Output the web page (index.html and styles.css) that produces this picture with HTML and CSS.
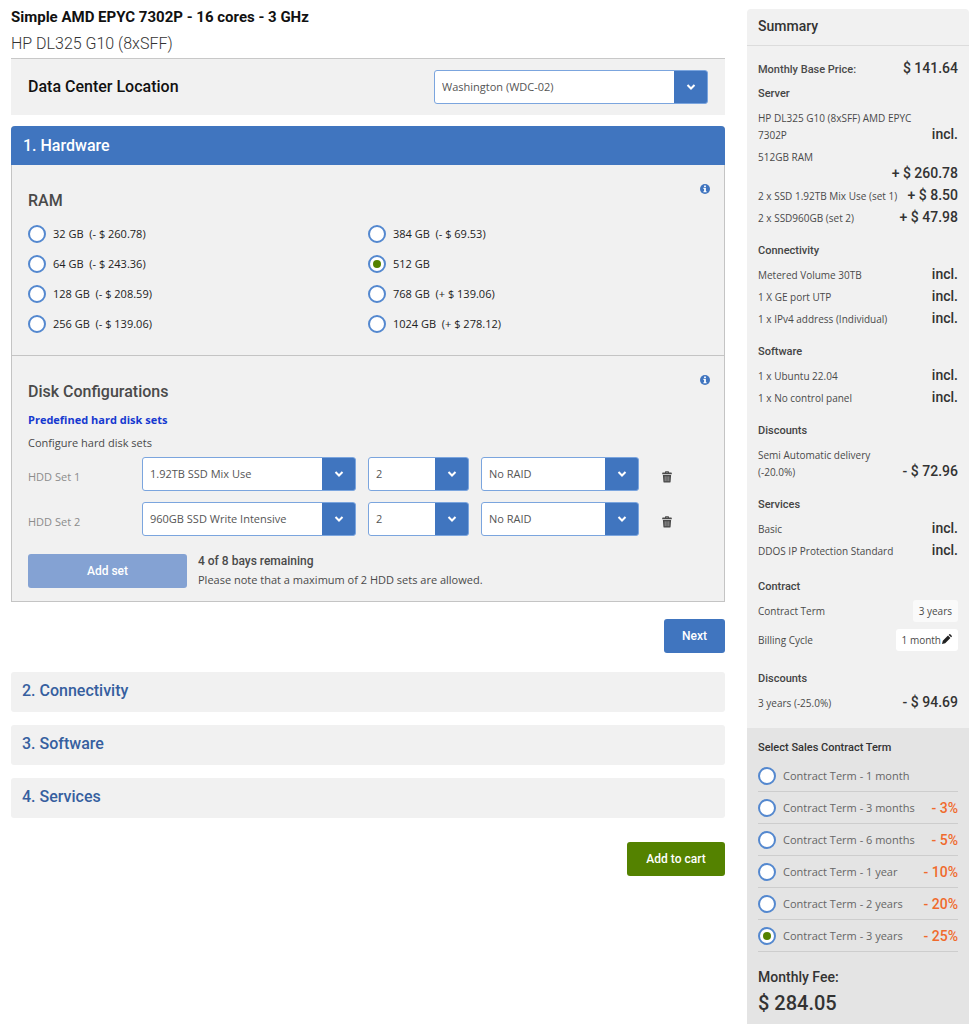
FILE: index.html
```html
<!DOCTYPE html>
<html lang="en">
<head>
    <meta charset="UTF-8">
    <meta name="viewport" content="width=device-width, initial-scale=1.0">
    <title>Simple AMD EPYC 7302P - Configure server</title>
    <link rel="stylesheet" href="styles.css">
</head>
<body>
    <!-- Shared icons -->
    <svg class="sprite" aria-hidden="true">
        <symbol id="icon-info" viewBox="0 0 10 10">
            <circle cx="5" cy="5" r="5" fill="#4075bf"/>
            <path d="M4.1 1.4h1.8v1.5H4.1zM3.4 3.8h2.5v3.4h.7v1.1H3.4V7.2h.7V4.9h-.7z" fill="#fff"/>
        </symbol>
        <symbol id="icon-trash" viewBox="0 0 10 12">
            <path d="M3 1.6V.9Q3 .3 3.6.3h2.8q.6 0 .6.6v.7h2.2q.6 0 .6.6v1.1H.2V2.2q0-.6.6-.6zM4 1.2v.4h2v-.4zM.9 4h8.2l-.5 6.7q-.1.9-1 .9H2.4q-.9 0-1-.9z" fill="#4a4a4a"/>
            <path d="M3.2 5.3v4.9M5 5.3v4.9M6.8 5.3v4.9" stroke="#b5b5b5" stroke-width=".7"/>
        </symbol>
        <symbol id="icon-pencil" viewBox="0 0 10 10">
            <path d="M0 10l.8-3.2L6 1.6l2.4 2.4-5.2 5.2zM6.7.9l.6-.6q.5-.5 1 0l1.4 1.4q.5.5 0 1l-.6.6z" fill="#222"/>
        </symbol>
    </svg>

    <div class="page">
        <main class="main">
            <header class="product">
                <h1>Simple AMD EPYC 7302P - 16 cores - 3 GHz</h1>
                <p>HP DL325 G10 (8xSFF)</p>
            </header>

            <div class="location">
                <label for="location">Data Center Location</label>
                <select class="select" id="location">
                    <option>Washington (WDC-02)</option>
                </select>
            </div>

            <section class="panel">
                <h2 class="panel-title">1. Hardware</h2>

                <div class="panel-section ram">
                    <div class="section-head">
                        <h3>RAM</h3>
                        <button class="icon-button" type="button" aria-label="About RAM"><svg class="info"><use href="#icon-info"/></svg></button>
                    </div>
                    <div class="ram-options">
                        <label><input class="radio" type="radio" name="ram">32 GB &nbsp;(- $ 260.78)</label>
                        <label><input class="radio" type="radio" name="ram">64 GB &nbsp;(- $ 243.36)</label>
                        <label><input class="radio" type="radio" name="ram">128 GB &nbsp;(- $ 208.59)</label>
                        <label><input class="radio" type="radio" name="ram">256 GB &nbsp;(- $ 139.06)</label>
                        <label><input class="radio" type="radio" name="ram">384 GB &nbsp;(- $ 69.53)</label>
                        <label><input class="radio" type="radio" name="ram" checked>512 GB</label>
                        <label><input class="radio" type="radio" name="ram">768 GB &nbsp;(+ $ 139.06)</label>
                        <label><input class="radio" type="radio" name="ram">1024 GB &nbsp;(+ $ 278.12)</label>
                    </div>
                </div>

                <div class="panel-section disks">
                    <div class="section-head">
                        <h3>Disk Configurations</h3>
                        <button class="icon-button" type="button" aria-label="About disk configurations"><svg class="info"><use href="#icon-info"/></svg></button>
                    </div>
                    <a class="predefined" href="#">Predefined hard disk sets</a>
                    <p class="configure">Configure hard disk sets</p>

                    <div class="disk-row">
                        <label for="disk1">HDD Set 1</label>
                        <select class="select" id="disk1"><option>1.92TB SSD Mix Use</option></select>
                        <select class="select" aria-label="Set 1 amount"><option>2</option></select>
                        <select class="select" aria-label="Set 1 RAID"><option>No RAID</option></select>
                        <button class="icon-button" type="button" aria-label="Remove set 1"><svg class="trash"><use href="#icon-trash"/></svg></button>
                    </div>
                    <div class="disk-row">
                        <label for="disk2">HDD Set 2</label>
                        <select class="select" id="disk2"><option>960GB SSD Write Intensive</option></select>
                        <select class="select" aria-label="Set 2 amount"><option>2</option></select>
                        <select class="select" aria-label="Set 2 RAID"><option>No RAID</option></select>
                        <button class="icon-button" type="button" aria-label="Remove set 2"><svg class="trash"><use href="#icon-trash"/></svg></button>
                    </div>

                    <div class="add-row">
                        <button class="button add-set" type="button" disabled>Add set</button>
                        <div class="bays">
                            <strong>4 of 8 bays remaining</strong>
                            <p>Please note that a maximum of 2 HDD sets are allowed.</p>
                        </div>
                    </div>
                </div>
            </section>

            <div class="actions">
                <button class="button next" type="button">Next</button>
            </div>

            <div class="steps">
                <button class="step" type="button">2. Connectivity</button>
                <button class="step" type="button">3. Software</button>
                <button class="step" type="button">4. Services</button>
            </div>

            <div class="actions cart">
                <button class="button add-to-cart" type="button">Add to cart</button>
            </div>
        </main>

        <aside class="summary">
            <h2>Summary</h2>

            <div class="summary-body">
                <div class="line base"><span>Monthly Base Price:</span><b>$ 141.64</b></div>

                <h3 class="first">Server</h3>
                <ul>
                    <li class="line"><span>HP DL325 G10 (8xSFF) AMD EPYC 7302P</span><b>incl.</b></li>
                    <li class="line stacked"><span>512GB RAM</span><b>+ $ 260.78</b></li>
                    <li class="line"><span>2 x SSD 1.92TB Mix Use (set 1)</span><b>+ $ 8.50</b></li>
                    <li class="line"><span>2 x SSD960GB (set 2)</span><b>+ $ 47.98</b></li>
                </ul>

                <h3>Connectivity</h3>
                <ul>
                    <li class="line"><span>Metered Volume 30TB</span><b>incl.</b></li>
                    <li class="line"><span>1 X GE port UTP</span><b>incl.</b></li>
                    <li class="line"><span>1 x IPv4 address (Individual)</span><b>incl.</b></li>
                </ul>

                <h3>Software</h3>
                <ul>
                    <li class="line"><span>1 x Ubuntu 22.04</span><b>incl.</b></li>
                    <li class="line"><span>1 x No control panel</span><b>incl.</b></li>
                </ul>

                <h3>Discounts</h3>
                <ul>
                    <li class="line"><span>Semi Automatic delivery (-20.0%)</span><b>- $ 72.96</b></li>
                </ul>

                <h3>Services</h3>
                <ul>
                    <li class="line"><span>Basic</span><b>incl.</b></li>
                    <li class="line"><span>DDOS IP Protection Standard</span><b>incl.</b></li>
                </ul>

                <div class="contract">
                    <h3>Contract</h3>
                    <div class="setting"><span>Contract Term</span><span class="chip">3 years</span></div>
                    <div class="setting"><span>Billing Cycle</span><button class="chip editable" type="button">1 month<svg class="pencil"><use href="#icon-pencil"/></svg></button></div>
                </div>

                <h3>Discounts</h3>
                <ul>
                    <li class="line"><span>3 years (-25.0%)</span><b>- $ 94.69</b></li>
                </ul>
            </div>

            <div class="terms">
                <h3>Select Sales Contract Term</h3>
                <label class="term"><input class="radio" type="radio" name="term">Contract Term - 1 month</label>
                <label class="term"><input class="radio" type="radio" name="term">Contract Term - 3 months<b>- 3%</b></label>
                <label class="term"><input class="radio" type="radio" name="term">Contract Term - 6 months<b>- 5%</b></label>
                <label class="term"><input class="radio" type="radio" name="term">Contract Term - 1 year<b>- 10%</b></label>
                <label class="term"><input class="radio" type="radio" name="term">Contract Term - 2 years<b>- 20%</b></label>
                <label class="term"><input class="radio" type="radio" name="term" checked>Contract Term - 3 years<b>- 25%</b></label>
                <div class="fee">Monthly Fee:<strong>$ 284.05</strong></div>
            </div>
        </aside>
    </div>
</body>
</html>
```
FILE: styles.css
```css
* {
    box-sizing: border-box;
}
body {
    margin: 0;
    font-family: "Open Sans", sans-serif;
    font-size: 11px;
    line-height: 18px;
    color: #4a4a4a;
    background: #fff;
}
h1, h2, h3, p, ul {
    margin: 0;
    padding: 0;
}
ul {
    list-style: none;
}
button, select {
    font-family: inherit;
    margin: 0;
}
.sprite {
    display: none;
}
.page {
    display: grid;
    grid-template-columns: minmax(0, 1fr) 222px;
    column-gap: 22px;
    min-height: 100vh;
    padding: 0 4px 0 11px;
}

/* Product header */
.product {
    padding-top: 4px;
    color: #333;
    border-bottom: 1px solid #c8c8c8;
}
.product h1 {
    font: 700 15px/26px Roboto, sans-serif;
    color: #111;
}
.product p {
    padding: 1px 0;
    font: 300 16px/26px Roboto, sans-serif;
}
.location {
    display: flex;
    align-items: center;
    justify-content: space-between;
    padding: 11px 17px;
    background: #f1f1f1;
}
.location label {
    font: 500 16px/24px Roboto, sans-serif;
    color: #111;
}
.location .select {
    width: 274px;
}

/* Form controls */
.select {
    appearance: none;
    height: 34px;
    width: 100%;
    padding: 0 42px 1px 7px;
    border: 1px solid #7ba5de;
    border-radius: 3px;
    font-size: 11px;
    color: #555;
    background-color: #fff;
    background-image:
        url("data:image/svg+xml,%3Csvg xmlns='http://www.w3.org/2000/svg' width='10' height='6'%3E%3Cpath d='M1.5 1L5 4.5 8.5 1' fill='none' stroke='white' stroke-width='2'/%3E%3C/svg%3E"),
        linear-gradient(#4075bf, #4075bf);
    background-repeat: no-repeat;
    background-position: right 11px center, right top;
    background-size: 10px 6px, 34px 100%;
    background-origin: padding-box, border-box;
    background-clip: border-box;
}
.radio {
    appearance: none;
    display: grid;
    place-items: center;
    flex: none;
    width: 18px;
    height: 18px;
    margin: 0;
    border: 2px solid #5488cf;
    border-radius: 50%;
    background: #fff;
}
.radio:checked::before {
    content: "";
    width: 8px;
    height: 8px;
    border-radius: 50%;
    background: #548200;
}
.icon-button {
    display: flex;
    padding: 0;
    border: 0;
    background: none;
    cursor: pointer;
}
.button {
    height: 34px;
    border: 0;
    border-radius: 3px;
    font: 500 12px/18px Roboto, sans-serif;
    color: #fff;
    background: #4075bf;
    cursor: pointer;
}

/* Hardware panel */
.panel {
    margin-top: 11px;
    border: 1px solid #c4c4c4;
    border-top: 0;
    border-radius: 4px 4px 0 0;
    background: #f1f1f1;
}
.panel-title {
    margin: 0 -1px;
    padding: 8px 12px 7px;
    border-radius: 4px 4px 0 0;
    font: 500 16px/24px Roboto, sans-serif;
    color: #fff;
    background: #4075bf;
}
.panel-section {
    padding: 19px 16px 0;
}
.section-head {
    display: flex;
    justify-content: space-between;
    align-items: flex-start;
}
.section-head h3 {
    padding-top: 5px;
    font: 500 16px/24px Roboto, sans-serif;
    color: #4a4a4a;
}
.section-head .icon-button {
    margin-right: -2px;
}
.info {
    width: 10px;
    height: 10px;
}
.ram {
    padding-bottom: 16px;
    border-bottom: 1px solid #c4c4c4;
}
.ram-options {
    display: grid;
    grid-template-columns: 1fr 1fr;
    grid-template-rows: repeat(4, 30px);
    grid-auto-flow: column;
    align-items: center;
    padding-top: 6px;
}
.ram-options label {
    display: flex;
    align-items: center;
    gap: 7px;
    color: #222;
}
.predefined {
    display: block;
    padding: 7px 0 5px;
    font-weight: 700;
    color: #1539d0;
    text-decoration: none;
}
.configure {
    padding-bottom: 5px;
}
.disk-row {
    display: grid;
    grid-template-columns: 102px 214fr 101fr 158fr 57px;
    column-gap: 12px;
    align-items: center;
    margin-bottom: 11px;
}
.disk-row label {
    padding-top: 6px;
    color: #8c8c8c;
}
.disk-row .icon-button {
    padding: 6px 0 0 11px;
}
.trash {
    width: 10px;
    height: 12px;
}
.add-row {
    display: flex;
    gap: 11px;
    padding: 7px 0 12px;
}
.add-set {
    width: 159px;
    background: #84a2d3;
    cursor: default;
}
.bays {
    margin-top: -2px;
}
.bays strong {
    display: block;
    font: 500 12px/19px Roboto, sans-serif;
}

/* Remaining steps */
.actions {
    display: flex;
    justify-content: flex-end;
    padding: 17px 0 19px;
}
.next {
    width: 61px;
}
.steps {
    display: grid;
    gap: 13px;
}
.step {
    padding: 7px 11px 9px;
    border: 0;
    border-radius: 3px;
    font: 500 16px/24px Roboto, sans-serif;
    text-align: left;
    color: #365f9f;
    background: #f1f1f1;
    cursor: pointer;
}
.cart {
    padding-top: 24px;
}
.add-to-cart {
    width: 98px;
    background: #548200;
}

/* Order summary */
.summary {
    display: flex;
    flex-direction: column;
    margin-top: 9px;
    border-radius: 4px 4px 0 0;
    background: #f1f1f1;
}
.summary h2 {
    padding: 7px 11px 9px;
    border-bottom: 1px solid #dcdcdc;
    font: 500 14px/20px Roboto, sans-serif;
    color: #333;
}
.summary-body {
    padding: 15px 11px 11px;
    font-size: 10px;
    line-height: 17px;
}
.summary h3 {
    padding: 10px 0 8px;
    font: 500 11px/17px Roboto, sans-serif;
    color: #444;
}
.summary h3.first {
    padding-top: 7px;
}
.line {
    display: flex;
    justify-content: space-between;
    align-items: flex-end;
    column-gap: 10px;
    margin-bottom: 5px;
}
.line b {
    flex: none;
    font: 500 14px/19px Roboto, sans-serif;
    margin-top: -2px;
    color: #333;
}
.line.base {
    margin-bottom: 0;
    font: 500 11px/17px Roboto, sans-serif;
}
.line.stacked {
    flex-direction: column;
    align-items: stretch;
}
.line.stacked b {
    text-align: right;
}
.contract {
    padding-bottom: 2px;
}
.contract h3 {
    padding: 13px 0 5px;
}
.setting {
    display: flex;
    justify-content: space-between;
    align-items: center;
    margin-bottom: 7px;
}
.chip {
    padding: 3px 6px 2px;
    border: 0;
    border-radius: 3px;
    font-size: 10px;
    line-height: 17px;
    color: #4a4a4a;
    background: #fafafa;
}
.chip.editable {
    background: #fff;
    cursor: pointer;
}
.pencil {
    width: 10px;
    height: 10px;
    margin-left: 1px;
}
.terms {
    flex: 1;
    padding: 11px 11px 0;
    background: #e4e4e4;
}
.terms h3 {
    padding: 0 0 4px;
    color: #333;
}
.term {
    display: flex;
    align-items: center;
    height: 32px;
    border-bottom: 1px solid #cdcdcd;
    color: #666;
}
.term .radio {
    margin-right: 7px;
}
.term b {
    margin-left: auto;
    font: 500 14px/18px Roboto, sans-serif;
    color: #f06a2c;
}
.fee {
    padding-top: 15px;
    font: 500 14px/20px Roboto, sans-serif;
    color: #333;
}
.fee strong {
    display: block;
    font: 500 20px/32px Roboto, sans-serif;
}
```
